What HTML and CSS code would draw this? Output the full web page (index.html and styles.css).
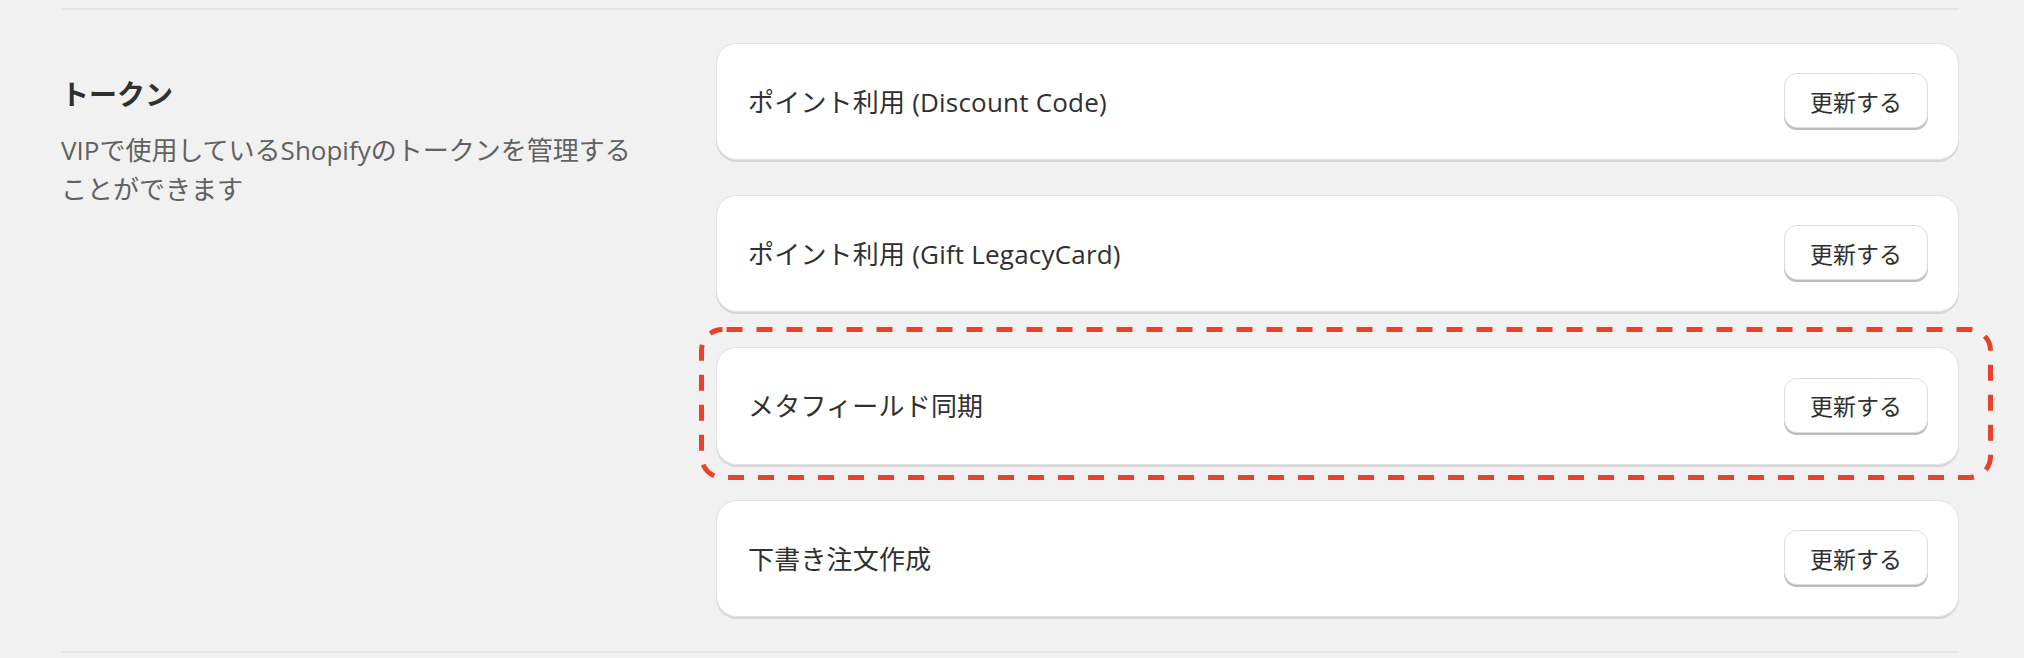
FILE: index.html
```html
<!DOCTYPE html>
<html lang="ja">
<head>
<meta charset="utf-8">
<title>トークン</title>
<link rel="stylesheet" href="styles.css">
</head>
<body>
<div class="page">
  <section class="section">
    <div class="annotation">
      <h2 class="heading">トークン</h2>
      <p class="description">VIPで使用しているShopifyのトークンを管理することができます</p>
    </div>
    <div class="cards">
      <div class="card">
        <span class="card-title">ポイント利用 (Discount Code)</span>
        <button class="btn" type="button">更新する</button>
      </div>
      <div class="card">
        <span class="card-title">ポイント利用 (Gift LegacyCard)</span>
        <button class="btn" type="button">更新する</button>
      </div>
      <div class="card card-highlight">
        <span class="card-title">メタフィールド同期</span>
        <button class="btn" type="button">更新する</button>
        <svg class="highlight" width="1294" height="153" viewBox="0 0 1294 153" aria-hidden="true">
          <rect x="2.5" y="2.5" width="1289" height="148" rx="21" ry="21" fill="none" stroke="#e8422a" stroke-width="5" stroke-dasharray="16 14" stroke-dashoffset="-4"/>
        </svg>
      </div>
      <div class="card">
        <span class="card-title">下書き注文作成</span>
        <button class="btn" type="button">更新する</button>
      </div>
    </div>
  </section>
</div>
</body>
</html>
```

FILE: styles.css
```css
html, body {
  margin: 0;
  padding: 0;
  background: #f1f1f1;
}

body {
  font-family: "Open Sans", "Noto Sans CJK JP", sans-serif;
  color: #303030;
  width: 2024px;
  height: 658px;
  overflow: hidden;
}

.page {
  padding: 8px 65px 0 61px;
}

.section {
  display: grid;
  grid-template-columns: 584px 1243px;
  column-gap: 71px;
  border-top: 2px solid #e5e5e5;
  border-bottom: 2px solid #e5e5e5;
  padding: 33px 0 34px;
}

.annotation {
  padding-top: 34px;
}

.heading {
  margin: 0;
  font-size: 28px;
  line-height: 35px;
  font-weight: 700;
  color: #303030;
}

.description {
  margin: 19px 0 0;
  font-size: 26px;
  line-height: 39px;
  color: #616161;
}

.cards {
  display: flex;
  flex-direction: column;
  gap: 35px;
}

.card {
  position: relative;
  box-sizing: border-box;
  height: 117px;
  display: flex;
  align-items: center;
  justify-content: space-between;
  padding: 0 30px 0 31px;
  background: #ffffff;
  border: 1px solid #e3e3e3;
  border-radius: 21px;
  box-shadow: 0 2px 0 0 #d6d6d6;
}

.card-highlight {
  height: 118px;
}

.card-title {
  font-size: 26px;
  line-height: 32px;
  letter-spacing: 0.2px;
  color: #303030;
}

.btn {
  box-sizing: border-box;
  width: 144px;
  height: 55px;
  padding: 0;
  font-family: inherit;
  font-size: 23px;
  color: #303030;
  background: #ffffff;
  border: 1px solid #dedede;
  border-radius: 13px;
  box-shadow: 0 2px 0 0 #bcbcbc;
  margin-top: -2px;
}

.highlight {
  position: absolute;
  left: -18px;
  top: -21px;
  pointer-events: none;
}
```
